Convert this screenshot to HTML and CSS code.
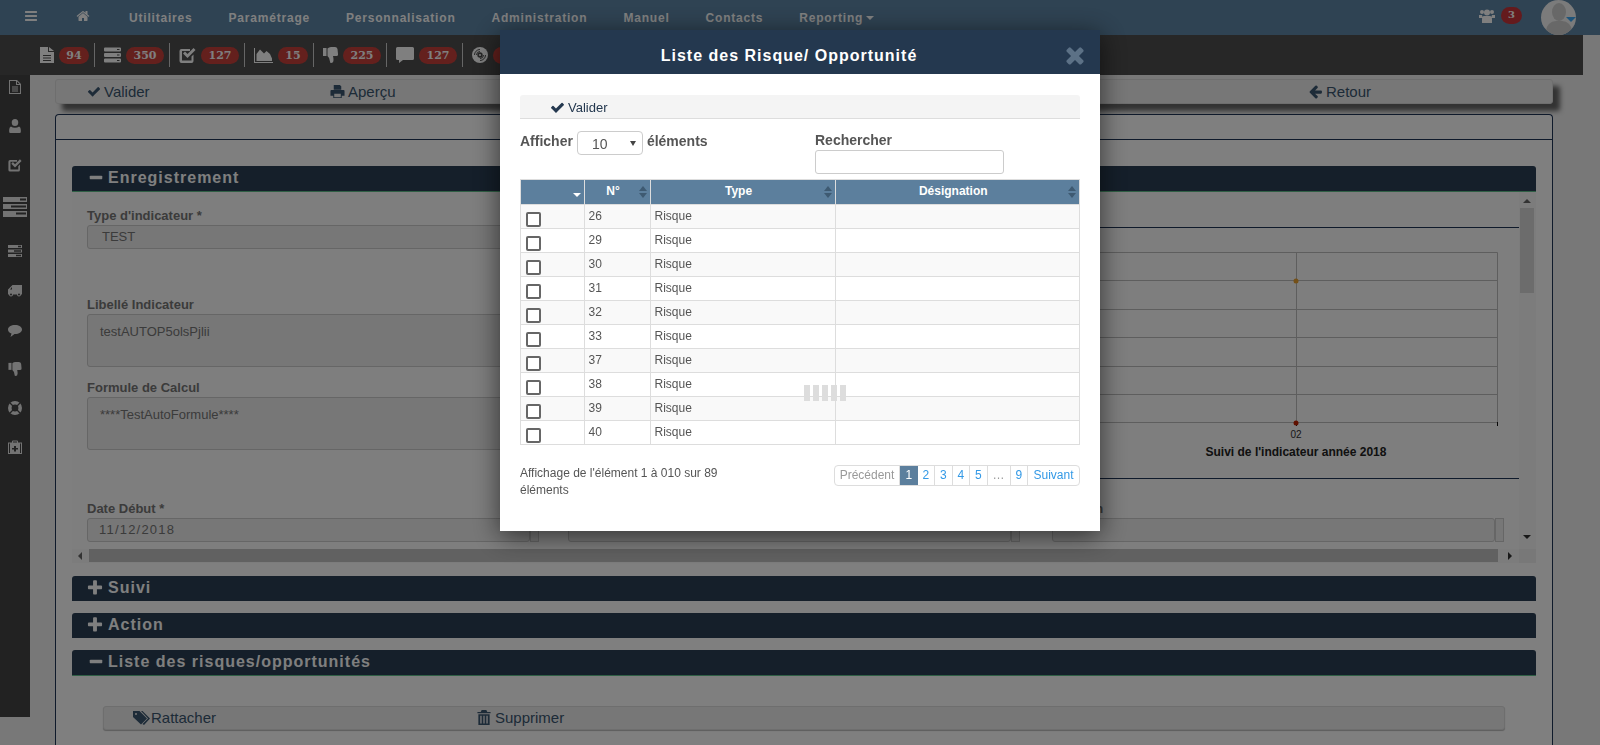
FILE: index.html
```html
<!DOCTYPE html>
<html lang="fr">
<head>
  <meta charset="UTF-8" />
  <title>Indicateur</title>
  <link rel="stylesheet" href="styles.css">
</head>
<body>

<svg class="sprites" xmlns="http://www.w3.org/2000/svg">
  <symbol id="i-check" viewBox="0 0 1792 1792"><path d="M1671 566q0 40-28 68l-724 724-136 136q-28 28-68 28t-68-28l-136-136-362-362q-28-28-28-68t28-68l136-136q28-28 68-28t68 28l294 295 656-657q28-28 68-28t68 28l136 136q28 28 28 68z"/></symbol>
  <symbol id="i-times" viewBox="0 0 1792 1792"><path d="M1490 1322q0 40-28 68l-136 136q-28 28-68 28t-68-28l-294-294-294 294q-28 28-68 28t-68-28l-136-136q-28-28-28-68t28-68l294-294-294-294q-28-28-28-68t28-68l136-136q28-28 68-28t68 28l294 294 294-294q28-28 68-28t68 28l136 136q28 28 28 68t-28 68l-294 294 294 294q28 28 28 68z"/></symbol>
  <symbol id="i-plus" viewBox="0 0 1792 1792"><path d="M1600 736v192q0 40-28 68t-68 28h-416v416q0 40-28 68t-68 28h-192q-40 0-68-28t-28-68v-416h-416q-40 0-68-28t-28-68v-192q0-40 28-68t68-28h416v-416q0-40 28-68t68-28h192q40 0 68 28t28 68v416h416q40 0 68 28t28 68z"/></symbol>
  <symbol id="i-minus" viewBox="0 0 1792 1792"><path d="M1600 736v192q0 40-28 68t-68 28h-1216q-40 0-68-28t-28-68v-192q0-40 28-68t68-28h1216q40 0 68 28t28 68z"/></symbol>
  <symbol id="i-left" viewBox="0 0 1792 1792"><path d="M1664 896v128q0 53-32.5 90.5t-84.5 37.5h-704l293 294q38 36 38 90t-38 90l-75 76q-37 37-90 37-52 0-91-37l-651-652q-37-37-37-90 0-52 37-91l651-650q38-38 91-38 52 0 90 38l75 74q38 38 38 91t-38 91l-293 293h704q52 0 84.5 37.5t32.5 90.5z"/></symbol>
  <symbol id="i-home" viewBox="0 0 1792 1792"><path d="M1472 992v480q0 26-19 45t-45 19h-384v-384h-256v384h-384q-26 0-45-19t-19-45v-480q0-1 .5-3t.5-3l575-474 575 474q1 2 1 6zm223-69l-62 74q-8 9-21 11h-3q-13 0-21-7l-692-577-692 577q-12 8-24 7-13-2-21-11l-62-74q-8-10-7-23.5t11-21.5l719-599q32-26 76-26t76 26l244 204v-195q0-14 9-23t23-9h192q14 0 23 9t9 23v408l219 182q10 8 11 21.5t-7 23.5z"/></symbol>
  <symbol id="i-bars" viewBox="0 0 1792 1792"><path d="M1664 1344v128q0 26-19 45t-45 19h-1408q-26 0-45-19t-19-45v-128q0-26 19-45t45-19h1408q26 0 45 19t19 45zm0-512v128q0 26-19 45t-45 19h-1408q-26 0-45-19t-19-45v-128q0-26 19-45t45-19h1408q26 0 45 19t19 45zm0-512v128q0 26-19 45t-45 19h-1408q-26 0-45-19t-19-45v-128q0-26 19-45t45-19h1408q26 0 45 19t19 45z"/></symbol>
  <symbol id="i-print" viewBox="0 0 16 16"><path fill-rule="evenodd" d="M4 1h6.500L12 2.500V6H4zM1.500 6.500h13q1 0 1 1V12.500H12.500V15H3.500V12.500H.5V7.500q0-1 1-1zM4.500 10.500V14h7V10.500z"/></symbol>
  <symbol id="i-file" viewBox="0 0 14 16"><path fill-rule="evenodd" d="M0 0h8v5h6v11H0zM3 8v1h8V8zM3 10.500v1h8v-1zM3 13v1h8v-1z"/><path d="M9 0l5 4H9z"/></symbol>
  <symbol id="i-file-o" viewBox="0 0 12 14"><path fill-rule="evenodd" d="M0 0h8l4 4v10H0zM1 1v12h10V5H7V1zM8 1.500V4h2.500zM3 6.500h6v1H3zM3 8.500h6v1H3zM3 10.500h6v1H3z"/></symbol>
  <symbol id="i-server" viewBox="0 0 17 15"><path fill-rule="evenodd" d="M1 0h15q1 0 1 1v2q0 1-1 1H1q-1 0-1-1V1q0-1 1-1zM13 1.500v1h2.500v-1zM1 5.500h15q1 0 1 1v2q0 1-1 1H1q-1 0-1-1v-2q0-1 1-1zM13 7v1h2.500V7zM1 11h15q1 0 1 1v2q0 1-1 1H1q-1 0-1-1v-2q0-1 1-1zM13 12.500v1h2.500v-1z"/></symbol>
  <symbol id="i-server-l" viewBox="0 0 24 20"><path fill-rule="evenodd" d="M0 0h24v5H0zM17 1.500v2h6v-2zM0 7h24v5H0zM8 8.500v2h15v-2zM0 14h24v6H0zM13 15.500v2h10v-2z"/></symbol>
  <symbol id="i-server-s" viewBox="0 0 14 12"><path fill-rule="evenodd" d="M0 0h14v3H0zM10 .8v1.400h3V.8zM0 4.500h14v3H0zM6 5.300v1.400h7V5.300zM0 9h14v3H0zM8 9.800v1.400h5V9.800z"/></symbol>
  <symbol id="i-check-sq" viewBox="0 0 17 16"><path d="M2.500 2H11v2H3v9.500h9.500V9.500l2-2v6.500q0 2-2 2H2.500q-2 0-2-2V4q0-2 2-2z"/><path d="M4 6.500L6 4.500 8.500 7 14.500 1 16.500 3 8.500 11z"/></symbol>
  <symbol id="i-area" viewBox="0 0 19 15"><path d="M0 0h1v14h18v1H0z"/><path d="M2.500 13V6L6 1.500 10 5.500 12.500 3 16 6 18 10.500V13z"/></symbol>
  <symbol id="i-thumb" viewBox="0 0 15 16"><path d="M0 1h3.500v8H0z"/><path d="M4.500 1.500Q6 0 8 0h4q2 0 2.500 2L15 7q.3 2-1.500 2H10q.5 2 .5 4 0 3-2.500 3-1 0-1-1.500Q7 11 4.500 9z"/></symbol>
  <symbol id="i-comment" viewBox="0 0 18 16"><path d="M1.500 0h15q1.500 0 1.500 1.500v10q0 1.500-1.500 1.500H7L3 16V13H1.500Q0 13 0 11.500v-10Q0 0 1.500 0z"/></symbol>
  <symbol id="i-comment-r" viewBox="0 0 14 12"><path d="M7 0c4 0 7 2 7 4.500S11 9 7 9L6.500 9 2.500 12 3.500 8.500C1.500 8 0 6.500 0 4.500 0 2 3 0 7 0z"/></symbol>
  <symbol id="i-disc" viewBox="0 0 16 16"><circle cx="8" cy="8" r="8"/><circle cx="8" cy="8" r="2.700" fill="#4e4e4e"/><circle cx="8" cy="8" r="1"/><path d="M8 11.500A3.500 3.500 0 0 0 11.500 8M8 13.500A5.500 5.500 0 0 0 13.500 8M8 4.500A3.500 3.500 0 0 0 4.500 8M8 2.500A5.500 5.500 0 0 0 2.500 8" fill="none" stroke="#4e4e4e"/></symbol>
  <symbol id="i-user" viewBox="0 0 10 12"><path d="M5 0a2.800 3 0 1 1 0 6 2.800 3 0 1 1 0-6zM1.500 6.500Q3 7.500 5 7.500T8.500 6.500Q10 7 10 9.500V11q0 1-1 1H1q-1 0-1-1V9.500Q0 7 1.500 6.500z"/></symbol>
  <symbol id="i-truck" viewBox="0 0 14 12"><path fill-rule="evenodd" d="M4.500 0H14v9.500h-1a2 2 0 0 1-4 0H5a2 2 0 0 1-4 0H0V4.500zM4 2L2 4.500H4zM3 8.500a1 1 0 1 0 0 2 1 1 0 0 0 0-2zM11 8.500a1 1 0 1 0 0 2 1 1 0 0 0 0-2z"/></symbol>
  <symbol id="i-ring" viewBox="0 0 14 14"><circle cx="7" cy="7" r="5.200" fill="none" stroke="currentColor" stroke-width="3.600"/><path d="M2 2L5 5M12 2L9 5M2 12L5 9M12 12L9 9" fill="none" stroke="#444" stroke-width="1.300"/></symbol>
  <symbol id="i-medkit" viewBox="0 0 14 14"><path fill-rule="evenodd" d="M4 2.500V1.500Q4 .5 5 .5H9Q10 .5 10 1.500V2.500H14V14H0V2.500zM5 1.500V2.500H9V1.500zM2 3.500H1V13H2zM12 3.500V13H13V3.500zM6 6V8H4V9.500H6V11.500H8V9.500H10V8H8V6z"/></symbol>
  <symbol id="i-users" viewBox="0 0 16 14"><circle cx="3" cy="3" r="2"/><circle cx="13" cy="3" r="2"/><circle cx="8" cy="3.500" r="3"/><path d="M0 6h3l1 3H0zM13 6h3v3h-4zM4.500 7h7Q13 8 13 10v4H3v-4q0-2 1.500-3z"/></symbol>
  <symbol id="i-tags" viewBox="0 0 17 14"><path fill-rule="evenodd" d="M0 0h6.500L14 7.500 8 13.500 0 6zM3 2a1 1 0 1 0 0 2 1 1 0 0 0 0-2z"/><path d="M8 0h1.500L17 7.500 11 14 9.500 13 15 7.500z"/></symbol>
  <symbol id="i-trash" viewBox="0 0 14 16"><path fill-rule="evenodd" d="M4.500 0H9.500L10.500 2H14V3.500H0V2H3.500zM1 4.500H13V16H1zM3 6V14.500H4.500V6zM6.300 6V14.500H7.700V6zM9.500 6V14.500H11V6z"/></symbol>
</svg>

<header class="topbar">
  <svg class="ico nav-burger"><use href="#i-bars"/></svg>
  <svg class="ico nav-home"><use href="#i-home"/></svg>
  <nav class="nav-links">
    <a>Utilitaires</a>
    <a>Paramétrage</a>
    <a>Personnalisation</a>
    <a>Administration</a>
    <a>Manuel</a>
    <a>Contacts</a>
    <a>Reporting<span class="caret"></span></a>
  </nav>
  <div class="top-right">
    <svg class="ico top-users"><use href="#i-users"/></svg>
    <span class="top-badge">3</span>
    <div class="avatar">
      <span class="avatar-head"></span>
      <span class="avatar-body"></span>
      <span class="avatar-caret"></span>
    </div>
  </div>
</header>

<div class="subbar">
  <div class="stat"><svg class="ico w14"><use href="#i-file"/></svg><span class="badge">94</span></div>
  <div class="stat"><svg class="ico w17"><use href="#i-server"/></svg><span class="badge badge-lg">350</span></div>
  <div class="stat"><svg class="ico w17"><use href="#i-check-sq"/></svg><span class="badge badge-lg">127</span></div>
  <div class="stat"><svg class="ico w19"><use href="#i-area"/></svg><span class="badge">15</span></div>
  <div class="stat"><svg class="ico w15"><use href="#i-thumb"/></svg><span class="badge badge-lg">225</span></div>
  <div class="stat"><svg class="ico w18"><use href="#i-comment"/></svg><span class="badge badge-lg">127</span></div>
  <div class="stat"><svg class="ico w16"><use href="#i-disc"/></svg><span class="badge badge-lg"></span></div>
</div>

<div class="page">
  <aside class="sidebar">
    <svg class="ico side-i"><use href="#i-file-o"/></svg>
    <svg class="ico side-i"><use href="#i-user"/></svg>
    <svg class="ico side-i"><use href="#i-check-sq"/></svg>
    <svg class="ico side-big"><use href="#i-server-l"/></svg>
    <svg class="ico side-i"><use href="#i-server-s"/></svg>
    <svg class="ico side-i side-truck"><use href="#i-truck"/></svg>
    <svg class="ico side-i side-comment"><use href="#i-comment-r"/></svg>
    <svg class="ico side-i"><use href="#i-thumb"/></svg>
    <svg class="ico side-i"><use href="#i-ring"/></svg>
    <svg class="ico side-i"><use href="#i-medkit"/></svg>
  </aside>

  <main class="content">
    <div class="toolbar toolbar-main">
      <a class="tool tool-valider"><svg class="ico t14"><use href="#i-check"/></svg>Valider</a>
      <a class="tool tool-apercu"><svg class="ico t15"><use href="#i-print"/></svg>Aperçu</a>
      <a class="tool"><svg class="ico t15"><use href="#i-left"/></svg>Retour</a>
    </div>

    <section class="card">
      <div class="card-top"></div>
      <div class="card-body">

        <h3 class="sec open"><svg class="ico sec-i"><use href="#i-minus"/></svg>Enregistrement</h3>
        <div class="panel">
          <div class="panel-view">
            <div class="form-top">
              <div class="form-left">
                <div class="field f-type">
                  <label>Type d'indicateur *</label>
                  <div class="input input-type">TEST</div>
                </div>
                <div class="field f-libelle">
                  <label>Libellé Indicateur</label>
                  <div class="input area">testAUTOP5olsPjlii</div>
                </div>
                <div class="field">
                  <label>Formule de Calcul</label>
                  <div class="input area">****TestAutoFormule****</div>
                </div>
              </div>
              <div class="form-chart">
                <svg class="chart" viewBox="540 228 979 250">
                  <g class="grid">
                    <path d="M560 252.500H1497.500V422.500M560 280.500H1497M560 309.500H1497M560 337.500H1497M560 366.500H1497M560 394.500H1497M560 422.500H1497M1296.500 252V423"/>
                  </g>
                  <path class="tick" d="M1497.500 422V426M1296.500 422V426"/>
                  <circle class="dot-a" cx="1296" cy="281" r="2.500"/>
                  <circle class="dot-b" cx="1296" cy="423" r="2.500"/>
                  <text class="chart-tick" x="1296" y="438">02</text>
                  <text class="chart-title" x="1296" y="456">Suivi de l'indicateur année 2018</text>
                </svg>
              </div>
            </div>
            <div class="form-dates">
              <div class="field">
                <label>Date Début *</label>
                <div class="date-wrap"><div class="input date">11/12/2018</div><span class="date-end"></span></div>
              </div>
              <div class="field">
                <label>&nbsp;</label>
                <div class="date-wrap"><div class="input date"></div><span class="date-end"></span></div>
              </div>
              <div class="field">
                <label>Date Fin</label>
                <div class="date-wrap"><div class="input date"></div><span class="date-end"></span></div>
              </div>
            </div>
          </div>
          <div class="vscroll">
            <span class="arr arr-up"></span>
            <span class="vthumb"></span>
            <span class="arr arr-down"></span>
          </div>
          <div class="hscroll">
            <span class="arr arr-left"></span>
            <span class="hthumb"></span>
            <span class="arr arr-right"></span>
          </div>
          <div class="corner"></div>
        </div>

        <h3 class="sec"><svg class="ico sec-plus"><use href="#i-plus"/></svg>Suivi</h3>
        <h3 class="sec"><svg class="ico sec-plus"><use href="#i-plus"/></svg>Action</h3>
        <h3 class="sec open"><svg class="ico sec-i"><use href="#i-minus"/></svg>Liste des risques/opportunités</h3>

        <div class="list-panel">
          <div class="toolbar toolbar-list">
            <a class="tool tool-rattacher"><svg class="ico t17"><use href="#i-tags"/></svg>Rattacher</a>
            <a class="tool"><svg class="ico t14"><use href="#i-trash"/></svg>Supprimer</a>
          </div>
        </div>

      </div>
    </section>
  </main>
</div>

<div class="backdrop">
  <div class="modal">
    <div class="modal-head">
      <h4>Liste des Risque/ Opportunité</h4>
      <svg class="ico modal-close"><use href="#i-times"/></svg>
    </div>
    <div class="modal-body">
      <div class="modal-tools">
        <a><svg class="ico t15"><use href="#i-check"/></svg>Valider</a>
      </div>

      <div class="dt-top">
        <div class="dt-length">
          <span class="dt-label">Afficher</span>
          <span class="dt-select">10</span>
          <span class="dt-label">éléments</span>
        </div>
        <div class="dt-search">
          <label for="q">Rechercher</label>
          <input type="text" id="q" />
        </div>
      </div>

      <div class="table-wrap">
        <table class="dt">
          <colgroup>
            <col class="c-check" /><col class="c-num" /><col class="c-type" /><col />
          </colgroup>
          <thead>
            <tr>
              <th><span class="sort-down"></span></th>
              <th>N°<span class="sort"></span></th>
              <th>Type<span class="sort"></span></th>
              <th>Désignation<span class="sort"></span></th>
            </tr>
          </thead>
          <tbody>
            <tr><td><input type="checkbox" class="row-check" /></td><td>26</td><td>Risque</td><td></td></tr>
            <tr><td><input type="checkbox" class="row-check" /></td><td>29</td><td>Risque</td><td></td></tr>
            <tr><td><input type="checkbox" class="row-check" /></td><td>30</td><td>Risque</td><td></td></tr>
            <tr><td><input type="checkbox" class="row-check" /></td><td>31</td><td>Risque</td><td></td></tr>
            <tr><td><input type="checkbox" class="row-check" /></td><td>32</td><td>Risque</td><td></td></tr>
            <tr><td><input type="checkbox" class="row-check" /></td><td>33</td><td>Risque</td><td></td></tr>
            <tr><td><input type="checkbox" class="row-check" /></td><td>37</td><td>Risque</td><td></td></tr>
            <tr><td><input type="checkbox" class="row-check" /></td><td>38</td><td>Risque</td><td></td></tr>
            <tr><td><input type="checkbox" class="row-check" /></td><td>39</td><td>Risque</td><td></td></tr>
            <tr><td><input type="checkbox" class="row-check" /></td><td>40</td><td>Risque</td><td></td></tr>
          </tbody>
        </table>
        <div class="loader"><i></i><i></i><i></i><i></i><i></i></div>
      </div>

      <div class="dt-bottom">
        <div class="dt-info">Affichage de l'élément 1 à 010 sur 89 éléments</div>
        <ul class="pager">
          <li class="off p-prev">Précédent</li>
          <li class="on">1</li>
          <li>2</li>
          <li>3</li>
          <li>4</li>
          <li>5</li>
          <li class="off p-dots">…</li>
          <li>9</li>
          <li class="p-next">Suivant</li>
        </ul>
      </div>
    </div>
  </div>
</div>

</body>
</html>
```

FILE: styles.css
```css
* {
  box-sizing: border-box;
}

html,
body {
  height: 745px;
}

body {
  margin: 0;
  overflow: hidden;
  background: #f0f0f0;
  font-family: "Liberation Sans", Arial, sans-serif;
  font-size: 13px;
  color: #777;
}

.sprites {
  display: none;
}

.ico {
  display: block;
  flex: none;
  fill: currentColor;
}

/* top nav */
.topbar {
  height: 35px;
  background: #5e86a6;
  color: #fff;
  display: flex;
  align-items: center;
}

.nav-burger {
  width: 14px;
  height: 14px;
  margin-left: 24px;
  margin-top: -3px;
}

.nav-home {
  width: 14px;
  height: 14px;
  margin-left: 38px;
  margin-top: -4px;
}

.nav-links {
  display: flex;
  gap: 36px;
  margin-left: 39px;
  font-size: 12px;
  font-weight: bold;
  letter-spacing: 0.8px;
}

.caret {
  display: inline-block;
  margin-left: 3px;
  vertical-align: 2px;
  border-top: 4px solid #fff;
  border-left: 4px solid transparent;
  border-right: 4px solid transparent;
}

.top-right {
  margin-left: auto;
  display: flex;
  align-items: center;
  height: 35px;
}

.top-users {
  width: 16px;
  height: 14px;
  margin-top: -4px;
}

.top-badge {
  width: 21px;
  height: 17px;
  margin-left: 6px;
  margin-top: -4px;
  background: #c8353a;
  border-radius: 9px;
  text-align: center;
  font: bold 10px/16px "DejaVu Serif", serif;
}

.avatar {
  position: relative;
  width: 35px;
  height: 35px;
  margin: 0 24px 0 19px;
  border-radius: 50%;
  background: #f6f6f6;
  overflow: hidden;
}

.avatar-head {
  position: absolute;
  left: 11px;
  top: 3px;
  width: 14px;
  height: 18px;
  border-radius: 50%;
  background: #d0d0d0;
}

.avatar-body {
  position: absolute;
  left: 5px;
  top: 21px;
  width: 26px;
  height: 16px;
  border-radius: 10px 10px 0 0;
  background: #d0d0d0;
}

.avatar-caret {
  position: absolute;
  right: 0;
  top: 17px;
  border-top: 5px solid #3fa9f5;
  border-left: 5px solid transparent;
  border-right: 5px solid transparent;
}

/* counters bar */
.subbar {
  width: 1583px;
  height: 40px;
  padding-left: 40px;
  background: #4e4e4e;
  color: #fff;
  display: flex;
  align-items: center;
}

.stat {
  height: 24px;
  display: flex;
  align-items: center;
  gap: 5px;
  padding-right: 5px;
  margin-right: 9px;
  border-right: 1px solid #ccc;
}

.stat:last-child {
  border-right: 0;
}

.w14 { width: 14px; height: 16px; }
.w15 { width: 15px; height: 16px; }
.w16 { width: 16px; height: 16px; }
.w17 { width: 17px; height: 16px; }
.w18 { width: 18px; height: 16px; }
.w19 { width: 19px; height: 15px; }

.badge {
  width: 30px;
  height: 17px;
  border-radius: 9px;
  background: #c8403a;
  text-align: center;
  font: bold 11px/17px "DejaVu Serif", serif;
}

.badge-lg {
  width: 38px;
}

/* page */
.page {
  display: flex;
}

.sidebar {
  width: 30px;
  height: 642px;
  padding-top: 5px;
  background: #444;
  color: #e6e6e6;
  display: flex;
  flex-direction: column;
  align-items: center;
  gap: 25px;
}

.side-i {
  width: 14px;
  height: 14px;
}

.side-big {
  width: 24px;
  height: 20px;
  margin-bottom: 2px;
}

.side-truck {
  margin: 1px 0;
}

.side-comment {
  margin-bottom: -1px;
}

.content {
  flex: 1;
  padding: 4px 47px 0 25px;
}

.toolbar {
  display: flex;
  height: 24.5px;
  background: #eee;
  border: 1px solid #ddd;
  border-radius: 3px;
  font-size: 15px;
  color: #3a5670;
}

.toolbar-main {
  margin-bottom: 10px;
  box-shadow: 7px 7px 5px #666;
}

.tool {
  display: flex;
  align-items: center;
  gap: 3px;
}

.tool-valider {
  width: 274px;
  padding-left: 31px;
}

.tool-apercu {
  width: 978px;
}

.t14 { width: 14px; height: 15px; }
.t15 { width: 15px; height: 15px; }
.t17 { width: 17px; height: 14px; }

.card {
  height: 640px;
  background: #fff;
  border: 1px solid #1e3456;
  border-bottom: 0;
  border-radius: 4px 4px 0 0;
}

.card-top {
  height: 25px;
  border-bottom: 1px solid #1e3456;
}

.card-body {
  padding: 26px 16px 0;
}

/* accordion headers */
.sec {
  display: flex;
  align-items: center;
  height: 25px;
  margin: 0 0 12px;
  padding-left: 16px;
  background: #2a3e54;
  border-radius: 3px 3px 0 0;
  color: #fff;
  font-size: 16px;
  letter-spacing: 1px;
}

.sec.open {
  height: 26px;
  margin-bottom: 0;
  border-bottom: 1px solid #5fbf8a;
}

.sec-i {
  width: 16px;
  height: 16px;
  margin-right: 4px;
}

.sec-plus {
  width: 18px;
  height: 18px;
  margin: 0 4px 0 -2px;
}

/* enregistrement panel */
.panel {
  height: 371px;
  margin-bottom: 13px;
  display: grid;
  grid-template-columns: 1fr 17px;
  grid-template-rows: 357px 14px;
  background: #fcfcfc;
}

.panel-view {
  overflow: hidden;
  padding-left: 15px;
}

.form-top {
  display: grid;
  grid-template-columns: 453px 1fr;
  height: 310px;
}

.form-left {
  padding-top: 17px;
}

.field label {
  display: block;
  height: 15px;
  margin-bottom: 1px;
  font-size: 13px;
  line-height: 13px;
  font-weight: bold;
  white-space: nowrap;
}

.f-type {
  margin-bottom: 49px;
}

.f-libelle {
  margin-bottom: 14px;
}

.input {
  height: 24px;
  border: 1px solid #ccc;
  border-radius: 3px;
  background: #eee;
  line-height: 22px;
  font-size: 13px;
}

.input-type {
  padding-left: 14px;
}

.area {
  height: 53px;
  padding: 9px 12px;
  line-height: 16px;
  font-size: 13px;
}

.form-chart {
  padding-top: 35px;
}

.chart {
  display: block;
  box-sizing: content-box;
  width: 979px;
  height: 250px;
  border-top: 1px solid #1e3456;
  border-bottom: 1px solid #1e3456;
}

.grid path {
  fill: none;
  stroke: #bcbcbc;
}

.tick {
  fill: none;
  stroke: #111;
}

.dot-a {
  fill: #e8a030;
}

.dot-b {
  fill: #c02000;
}

.chart-tick {
  font-size: 10px;
  fill: #333;
  text-anchor: middle;
}

.chart-title {
  font-size: 12px;
  font-weight: bold;
  fill: #222;
  text-anchor: middle;
}

.form-dates {
  display: grid;
  grid-template-columns: 481px 484px 460px;
}

.date-wrap {
  display: flex;
}

.date {
  width: 443px;
  padding-left: 11px;
  letter-spacing: 1.2px;
}

.date-end {
  width: 9px;
  border: 1px solid #ccc;
  background: #eee;
}

/* fake scrollbars */
.vscroll {
  position: relative;
  background: #f8f8f8;
}

.vthumb {
  position: absolute;
  left: 1px;
  top: 16px;
  width: 14px;
  height: 85px;
  background: #d8d8d8;
}

.hscroll {
  position: relative;
  background: #f8f8f8;
}

.hthumb {
  position: absolute;
  left: 17px;
  top: 0;
  width: 1409px;
  height: 13px;
  background: #c2c2c2;
}

.corner {
  background: #f0f0f0;
}

.arr {
  position: absolute;
  width: 0;
  height: 0;
  border: 4px solid transparent;
}

.arr-up {
  left: 4px;
  top: 3px;
  border-bottom-color: #666;
}

.arr-down {
  left: 4px;
  top: 343px;
  border-top-color: #333;
}

.arr-left {
  left: 2px;
  top: 3px;
  border-right-color: #666;
}

.arr-right {
  right: 3px;
  top: 3px;
  border-left-color: #333;
}

.list-panel {
  padding: 30px 31px 0;
}

.toolbar-list {
  box-shadow: 0 1px 1px #bbb;
}

.tool-rattacher {
  width: 373px;
  padding-left: 29px;
  gap: 1px;
}

.toolbar-list .tool:last-child {
  gap: 4px;
}

/* modal */
.backdrop {
  position: fixed;
  inset: 0;
  background: rgba(0, 0, 0, 0.5);
  display: flex;
  justify-content: center;
  align-items: flex-start;
  padding-top: 30px;
}

.modal {
  width: 600px;
  height: 501px;
  background: #fff;
  box-shadow: 0 5px 25px rgba(0, 0, 0, 0.6);
}

.modal-head {
  position: relative;
  height: 44px;
  background: #24384f;
  text-align: center;
}

.modal-head h4 {
  margin: 0;
  padding-right: 22px;
  font-size: 16px;
  line-height: 52px;
  letter-spacing: 1px;
  color: #fff;
}

.modal-close {
  position: absolute;
  right: 12px;
  top: 12px;
  width: 26px;
  height: 26px;
  color: #5c7186;
}

.modal-body {
  padding: 21px 20px 0;
  color: #555;
}

.modal-tools {
  height: 24px;
  padding-left: 30px;
  background: #f4f4f4;
  border-bottom: 1px solid #ddd;
  border-radius: 3px 3px 0 0;
  color: #24384f;
  font-size: 13px;
}

.modal-tools a {
  display: flex;
  align-items: center;
  gap: 3px;
  height: 24px;
}

.dt-top {
  display: flex;
  height: 60px;
  padding-top: 10px;
  font-size: 14px;
  font-weight: bold;
}

.dt-length {
  display: flex;
  align-items: center;
  height: 26px;
  margin-top: 1px;
  gap: 4px;
  width: 295px;
}

.dt-label {
  padding-bottom: 4px;
}

.dt-select {
  position: relative;
  width: 66px;
  height: 24px;
  padding-left: 14px;
  border: 1px solid #ccc;
  border-radius: 4px;
  font-weight: normal;
  line-height: 24px;
}

.dt-select::after {
  content: "";
  position: absolute;
  right: 6px;
  top: 9px;
  border-top: 5px solid #444;
  border-left: 3px solid transparent;
  border-right: 3px solid transparent;
}

.dt-search label {
  display: block;
  height: 21px;
  line-height: 22px;
}

.dt-search input {
  display: block;
  width: 189px;
  height: 24px;
  border: 1px solid #ccc;
  border-radius: 3px;
  background: #fff;
}

.table-wrap {
  position: relative;
}

.dt {
  width: 560px;
  table-layout: fixed;
  border-collapse: collapse;
  font-size: 12px;
}

.c-check { width: 63.5px; }
.c-num { width: 66px; }
.c-type { width: 185px; }

.dt th,
.dt td {
  border: 1px solid #ddd;
  padding: 0;
  height: 24px;
}

.dt th {
  position: relative;
  height: 25px;
  padding: 0 8px 3px 0;
  background: #5c7f9d;
  color: #fff;
  text-align: center;
}

.dt td {
  padding-left: 4px;
  padding-bottom: 2px;
}

.dt tbody tr:nth-child(odd) td {
  background: #f9f9f9;
}

.row-check {
  appearance: none;
  display: block;
  width: 15px;
  height: 15px;
  margin: 7px 0 -1px 1px;
  border: 2px solid #666;
  border-radius: 2px;
  background: #fff;
}

.sort::before,
.sort::after {
  content: "";
  position: absolute;
  right: 3px;
  border-left: 4px solid transparent;
  border-right: 4px solid transparent;
}

.sort::before {
  top: 6px;
  border-bottom: 5px solid #3e5a72;
}

.sort::after {
  top: 13px;
  border-top: 5px solid #3e5a72;
}

.sort-down {
  position: absolute;
  right: 3px;
  top: 13px;
  border-top: 4px solid #fff;
  border-left: 4px solid transparent;
  border-right: 4px solid transparent;
}

.loader {
  position: absolute;
  left: 284px;
  top: 206px;
  display: flex;
  gap: 3px;
}

.loader i {
  width: 6px;
  height: 16px;
  background: #ddd;
}

.dt-bottom {
  display: flex;
  justify-content: space-between;
  margin-top: 20px;
  font-size: 12px;
}

.dt-info {
  width: 215px;
  line-height: 17px;
}

.pager {
  display: flex;
  height: 21px;
  margin: 0;
  padding: 0;
  list-style: none;
  border: 1px solid #ddd;
  border-radius: 4px;
  color: #3399e6;
  line-height: 19px;
}

.pager li {
  width: 17.5px;
  text-align: center;
  border-right: 1px solid #ddd;
}

.pager li:last-child {
  border-right: 0;
}

.pager .on {
  background: #5c7f9d;
  color: #fff;
  border-right: 0;
}

.pager .off {
  color: #999;
}

.pager .p-prev { width: 65px; }
.pager .p-dots { width: 23px; }
.pager .p-next { width: 51px; }
```
